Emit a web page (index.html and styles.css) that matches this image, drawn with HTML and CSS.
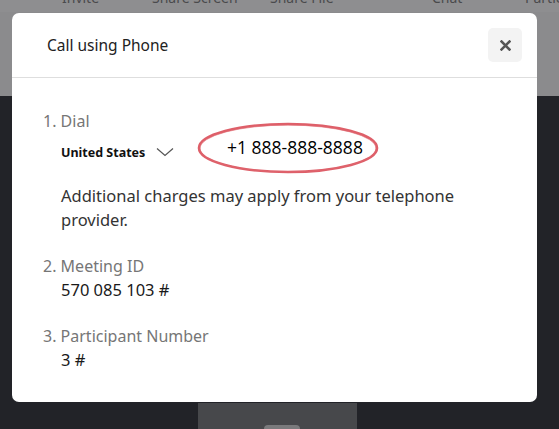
FILE: index.html
```html
<!DOCTYPE html>
<html lang="en">

<head>
    <meta charset="UTF-8">
    <title>Call using Phone</title>
    <link rel="stylesheet" href="styles.css">
</head>

<body>
    <div class="stage">
        <div class="topbar">
            <ul class="toolbar">
                <li class="tb-invite">Invite</li>
                <li class="tb-screen">Share Screen</li>
                <li class="tb-file">Share File</li>
                <li class="tb-chat">Chat</li>
                <li class="tb-part">Participants</li>
            </ul>
        </div>
        <div class="main">
            <div class="tile">
                <div class="tile-handle"></div>
            </div>
        </div>
    </div>

    <!-- 弹窗 盖在页面上 -->
    <div class="modal">
        <div class="modal-head">
            <h2 class="modal-title">Call using Phone</h2>
            <button class="close-btn" aria-label="Close">
                <svg width="11" height="11" viewBox="0 0 11 11">
                    <path d="M1.5 1.5 L9.5 9.5 M9.5 1.5 L1.5 9.5" stroke="#555" stroke-width="2.5" stroke-linecap="square" />
                </svg>
            </button>
        </div>
        <div class="modal-body">
            <div class="step">
                <div class="step-label">1. Dial</div>
                <div class="dial-row">
                    <div class="country">
                        United States
                        <svg class="chevron" width="18" height="10" viewBox="0 0 18 10">
                            <path d="M1 1.5 L9 8.5 L17 1.5" fill="none" stroke="#555" stroke-width="1.2" />
                        </svg>
                    </div>
                    <div class="phone">+1 888-888-8888</div>
                    <svg class="circle-mark" width="184" height="54" viewBox="0 0 184 54">
                        <ellipse cx="92" cy="27" rx="89" ry="24" fill="none" stroke="#d8434f" stroke-width="2.6" stroke-opacity="0.85" />
                        <ellipse cx="92" cy="27.5" rx="88" ry="23.4" fill="none" stroke="#e06870" stroke-width="1" stroke-opacity="0.6" />
                    </svg>
                </div>
                <p class="note">Additional charges may apply from your telephone provider.</p>
            </div>
            <div class="step">
                <div class="step-label">2. Meeting ID</div>
                <div class="step-value">570 085 103 #</div>
            </div>
            <div class="step">
                <div class="step-label">3. Participant Number</div>
                <div class="step-value">3 #</div>
            </div>
        </div>
    </div>
</body>

</html>
```

FILE: styles.css
```css
body {
    margin: 0;
    font-family: "Noto Sans", "Open Sans", sans-serif;
}

.stage {
    width: 559px;
    height: 429px;
    display: flex;
    flex-direction: column;
    overflow: hidden;
}

.topbar {
    height: 96px;
    background-color: #8b8b8d;
    border-top: 12px solid #8e8e90;
    box-sizing: border-box;
    position: relative;
}

.toolbar {
    list-style: none;
    margin: 0;
    padding: 0;
    position: absolute;
    top: -24px;
    left: 0;
    width: 559px;
    height: 20px;
    font-size: 14px;
    color: #4a4a4c;
}

.toolbar li {
    position: absolute;
    top: 0;
}

.tb-invite { left: 62px; }
.tb-screen { left: 152px; }
.tb-file { left: 270px; }
.tb-chat { left: 432px; }
.tb-part { left: 525px; }

.main {
    flex: 1;
    background-color: #222328;
    display: flex;
    align-items: flex-end;
    padding-left: 198px;
}

.tile {
    width: 159px;
    height: 26px;
    background-color: #47484b;
    display: flex;
    justify-content: center;
    align-items: flex-end;
}

.tile-handle {
    width: 36px;
    height: 4px;
    margin-left: 8px;
    background-color: #7a7a7c;
    border-radius: 4px 4px 0 0;
}

.modal {
    position: absolute;
    left: 12px;
    top: 13px;
    width: 525px;
    height: 389px;
    background-color: #fff;
    border-radius: 7px;
}

.modal-head {
    height: 64px;
    border-bottom: 1px solid #dedede;
    display: flex;
    align-items: center;
    justify-content: space-between;
    padding: 0 15px 0 35px;
}

.modal-title {
    margin: 0;
    font-size: 15.5px;
    font-weight: normal;
    color: #222;
}

.close-btn {
    width: 34px;
    height: 34px;
    border: none;
    border-radius: 5px;
    background-color: #f3f3f3;
    display: flex;
    align-items: center;
    justify-content: center;
    padding: 0;
}

.modal-body {
    padding: 31px 0 0 31px;
}

.step {
    margin-bottom: 22px;
}

.step-label {
    font-size: 16px;
    line-height: 24px;
    color: #767676;
}

.step-value {
    padding-left: 18px;
    font-size: 16.5px;
    line-height: 24px;
    color: #1a1a1a;
}

.dial-row {
    position: relative;
    display: flex;
    align-items: center;
    height: 28px;
    padding-left: 18px;
}

.country {
    font-size: 12.5px;
    font-weight: bold;
    color: #111;
    width: 166px;
    display: flex;
    align-items: center;
    padding-top: 10px;
}

.chevron {
    margin-left: 11px;
}

.phone {
    font-family: "Open Sans", "Noto Sans", sans-serif;
    font-size: 17.5px;
    color: #000;
}

.circle-mark {
    position: absolute;
    left: 153px;
    top: -12px;
}

.note {
    margin: 23px 0 0 18px;
    width: 430px;
    font-size: 16.5px;
    line-height: 24px;
    color: #333;
}
```
